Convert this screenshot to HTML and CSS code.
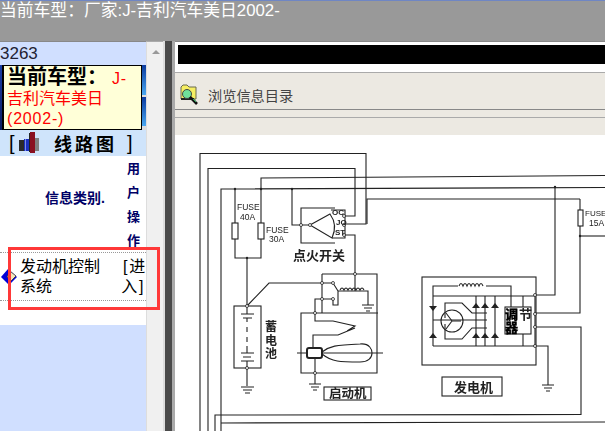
FILE: index.html
```html
<!DOCTYPE html>
<html lang="zh-CN">
<head>
    <meta charset="UTF-8">
    <title>当前车型</title>
    <link rel="stylesheet" href="styles.css">
</head>
<body>
    <div class="top-bar">当前车型：厂家:J-吉利汽车美日2002-</div>
    <div class="main">
        <div class="side">
            <div class="side-id">3263</div>
            <div class="car-row">
                <div class="car-strip-left"></div>
                <div class="car-box">
                    <span class="car-label">当前车型：</span><span class="car-name"><span class="half half--first">J-</span>吉利汽车美日<span class="half">(2002-)</span></span>
                </div>
                <div class="car-strip-right"><span></span><span></span></div>
            </div>
            <div class="side-title">
                <span class="bracket">[</span>
                <svg class="book-icon" width="20" height="22" xmlns="http://www.w3.org/2000/svg">
                    <rect x="0" y="8" width="5" height="11" fill="#2a2a2a"></rect>
                    <rect x="5" y="7" width="5" height="12" fill="#1a2fc0"></rect>
                    <rect x="6" y="7" width="1" height="12" fill="#7f8fe0"></rect>
                    <rect x="11" y="0" width="5" height="21" fill="#8a1020"></rect>
                    <rect x="10" y="1" width="1" height="19" fill="#222"></rect>
                    <rect x="16" y="6" width="4" height="13" fill="#808080"></rect>
                </svg>
                <span class="side-title__text">线路图</span>
                <span class="bracket">]</span>
            </div>
            <div class="info-table">
                <div class="info-label">信息类别.</div>
                <div class="info-user">
                    <span>用</span><span>户</span><span>操</span><span>作</span>
                </div>
            </div>
            <div class="sys-row">
                <svg class="diamond" width="18" height="18" xmlns="http://www.w3.org/2000/svg">
                    <polygon points="8,1 1,9 9,17 17,9" fill="#0000d8"></polygon>
                    <polygon points="10,3 16,8 11,13 7,9" fill="#f4e6b8" stroke="#222" stroke-width="0.7"></polygon>
                </svg>
                <div class="sys-name">发动机控制系统</div>
                <div class="sys-enter"><span class="half-box">[</span>进入<span class="half-box">]</span></div>
            </div>
            <div class="side-white"></div>
        </div>
        <div class="scroll"><span class="scroll-up"></span></div>
        <div class="split"></div>
        <div class="content">
            <div class="strip-wrap"><div class="black-strip"></div></div>
            <div class="toolbar">
                <svg class="folder-icon" width="19" height="22" xmlns="http://www.w3.org/2000/svg">
                    <path d="M1 3L3 1H7L9 3H16V15H1Z" fill="#f6ee62" stroke="#6a6a50"></path>
                    <path d="M1 15H14" stroke="#222" stroke-width="2"></path>
                    <circle cx="7" cy="10" r="4.5" fill="#6fe09a" stroke="#444"></circle>
                    <path d="M10 13L17 20" stroke="#111" stroke-width="2.6"></path>
                    <path d="M13 15L16 18" stroke="#2bb35c" stroke-width="1"></path>
                </svg>
                <span class="toolbar-text">浏览信息目录</span>
            </div>
            <div class="subbar"></div>
            <div class="drawing">
                <svg class="circuit" width="430" height="296" viewBox="175 135 430 296" xmlns="http://www.w3.org/2000/svg">
                    <g class="wire">
                        <!-- long feeds from the ignition switch -->
                        <path d="M200 431V153.5H366V224H345"></path>
                        <path d="M208 431V168.5H355V216H345"></path>
                        <path d="M261 223V178L605 175.500"></path>
                        <path d="M221 431V189L605 187.500"></path>
                        <!-- fuses -->
                        <path d="M235 189V223M235 239V258H261V239"></path>
                        <path d="M247 258V306"></path>
                        <!-- ignition switch -->
                        <path d="M292 189V225H310"></path>
                        <path d="M335 208H301V243H335"></path>
                        <path d="M310 225L330 214Q338 225 332 238Z"></path>
                        <path d="M331 210H345V238H332"></path>
                        <path d="M367 224V199H580"></path>
                        <path d="M345 235H355V274"></path>
                        <!-- starter relay -->
                        <path d="M247 306L269 283H333"></path>
                        <path d="M322 274H377V373H301V313H378"></path>
                        <path d="M322 274V313"></path>
                        <path d="M315 313V299H333V305H338V291M333 283L338 291"></path>
                        <path d="M338 291H368V305M355 274V291"></path>
                        <path d="M340 290Q342 286 344 290Q346 286 348 290Q350 286 352 290Q354 286 356 290Q358 286 360 290Q362 286 364 290"></path>
                        <path d="M315 313V321H333L355 326L347 331M313 348V335H338L355 328"></path>
                        <path d="M297 353H383"></path>
                        <path d="M322 352C330 346 335 345 360 344C370 343 372 350 372 353C372 358 368 362 360 362C340 362 332 362 322 354"></path>
                        <path d="M315 358V384"></path>
                        <!-- battery -->
                        <rect x="234" y="306" width="27" height="62"></rect>
                        <path d="M247 306V314M241 314H254M243 318H252M247 318V322M247 327V332M247 337V342M247 346V353M241 353H254M243 357H251M241 361H254M247 361V386"></path>
                        <!-- bottom loop -->
                        <path d="M215 431V415L581 414.500V327H535"></path>
                        <path d="M221 423L605 422"></path>
                        <!-- right feeds -->
                        <path d="M555 187V295H535"></path>
                        <path d="M580 199V210M580 226V313H535"></path>
                        <path d="M580 236H605"></path>
                        <!-- generator -->
                        <rect x="422" y="277" width="114" height="88"></rect>
                        <path d="M433 346V286H458M486 286H511V308"></path>
                        <path d="M459 286Q461 281 463 286Q465 281 467 286Q469 281 471 286Q473 281 475 286Q477 281 479 286Q481 281 483 286"></path>
                        <path d="M433 296H535V346H433"></path>
                        <path d="M476 296V346M485 296V346M495 296V346"></path>
                        <path d="M523 296V307M523 334V346"></path>
                        <path d="M445 318V303H462L472 313H487M445 324V339H462L472 328H487"></path>
                        <path d="M433 320H487"></path>
                        <circle cx="452" cy="321" r="11"></circle>
                        <path d="M452 321L446 313M452 321L446 329M452 321H461"></path>
                        <path d="M535 346H548V385"></path>
                    </g>
                    <g class="solid">
                        <polygon points="429,306 437,306 433,311"></polygon>
                        <polygon points="429,338 437,338 433,333"></polygon>
                        <polygon points="472,308 480,308 476,303"></polygon>
                        <polygon points="481,308 489,308 485,303"></polygon>
                        <polygon points="491,308 499,308 495,303"></polygon>
                        <polygon points="472,338 480,338 476,333"></polygon>
                        <polygon points="481,338 489,338 485,333"></polygon>
                        <polygon points="491,338 499,338 495,333"></polygon>
                        <circle cx="235" cy="189" r="1.2"></circle>
                        <circle cx="261" cy="189" r="1.2"></circle>
                        <circle cx="292" cy="189" r="1.2"></circle>
                        <circle cx="555" cy="187" r="1.2"></circle>
                        <circle cx="580" cy="236" r="1.2"></circle>
                        <circle cx="247" cy="258" r="1.2"></circle>
                    </g>
                    <g class="nodes">
                        <circle cx="301" cy="225" r="1.5"></circle>
                        <circle cx="310" cy="225" r="1.5"></circle>
                        <circle cx="344" cy="216" r="1.5"></circle>
                        <circle cx="344" cy="225" r="1.5"></circle>
                        <circle cx="344" cy="235" r="1.5"></circle>
                        <circle cx="355" cy="274" r="1.5"></circle>
                        <circle cx="322" cy="283" r="1.5"></circle>
                        <circle cx="333" cy="283" r="1.5"></circle>
                        <circle cx="322" cy="299" r="1.5"></circle>
                        <circle cx="333" cy="299" r="1.5"></circle>
                        <circle cx="315" cy="313" r="1.5"></circle>
                        <circle cx="315" cy="373" r="1.5"></circle>
                        <circle cx="247" cy="306" r="1.5"></circle>
                        <circle cx="247" cy="368" r="1.5"></circle>
                        <circle cx="535" cy="295" r="1.5"></circle>
                        <circle cx="535" cy="314" r="1.5"></circle>
                        <circle cx="535" cy="327" r="1.5"></circle>
                        <circle cx="535" cy="346" r="1.5"></circle>
                    </g>
                    <g class="parts">
                        <rect x="232" y="223" width="6" height="16"></rect>
                        <rect x="258" y="223" width="6" height="16"></rect>
                        <rect x="578" y="210" width="5" height="16"></rect>
                        <rect x="505" y="307" width="26" height="27"></rect>
                        <rect class="armature" x="307" y="348" width="15" height="10" rx="2"></rect>
                    </g>
                    <path class="ground" d="M241 387H254M243 390H252M245 393H250M309 384H321M311 387H319M313 390H317M362 305H374M364 308H372M366 311H370M542 385H554M544 388H552M546 391H550"></path>
                    <text class="fuse" x="237" y="210">FUSE</text>
                    <text class="fuse" x="240" y="219.500">40A</text>
                    <text class="fuse" x="266" y="232.500">FUSE</text>
                    <text class="fuse" x="269" y="242">30A</text>
                    <text class="fuse fuse--tight" x="585" y="216">FUSE</text>
                    <text class="fuse" x="589" y="225.500">15A</text>
                    <text class="switch-tag" x="332" y="215">OC</text>
                    <text class="switch-tag" x="336" y="225">JO</text>
                    <text class="switch-tag" x="335" y="235">ST</text>
                    <text class="cjk" x="293" y="260">点火开关</text>
                    <text class="cjk cjk--col" x="265" y="331">蓄</text>
                    <text class="cjk cjk--col" x="265" y="345">电</text>
                    <text class="cjk cjk--col" x="265" y="358">池</text>
                    <text class="cjk cjk--heavy" x="505" y="319">调</text>
                    <text class="cjk" x="519" y="319">节</text>
                    <text class="cjk cjk--heavy" x="505" y="332">器</text>
                    <rect class="label-box" x="324" y="387" width="47" height="13"></rect>
                    <text class="cjk cjk--small" x="329" y="398">启动机</text>
                    <rect class="label-box" x="442" y="377" width="60" height="19"></rect>
                    <text class="cjk" x="454" y="392">发电机</text>
                </svg>
            </div>
        </div>
    </div>
</body>
</html>
```

FILE: styles.css
```css
*{
    margin: 0;
    padding: 0;
    box-sizing: border-box;
}
html,body{
    height: 100%;
    overflow: hidden;
}
body{
    display: flex;
    flex-direction: column;
    background-color: #fff;
    font-family: "Liberation Sans", "Noto Sans CJK SC", sans-serif;
}
.top-bar{
    height: 41px;
    background-color: #999;
    border-top: 1px solid #6f86c4;
    color: #fff;
    font-size: 16.800px;
    line-height: 20px;
    white-space: nowrap;
    overflow: hidden;
}
.main{
    flex: 1;
    display: flex;
    min-height: 0;
}
.side{
    width: 147px;
    position: relative;
    z-index: 1;
    display: flex;
    flex-direction: column;
    background-color: #d0dfff;
    border-top: 1px solid #888;
    border-right: 1px solid #ddd;
}
.side-id{
    height: 23px;
    padding-top: 2px;
    font-size: 17px;
    line-height: 20px;
    color: #223;
}
.car-row{
    height: 65px;
    display: flex;
}
.car-strip-left{
    width: 3px;
    background: linear-gradient(#1a3ea8, #0a1c60);
    border-right: 1px solid #000;
}
.car-box{
    width: 139px;
    padding: 1px 2px 0 3px;
    background-color: #ffffd8;
    border: 1px solid #000;
    font-size: 16px;
    line-height: 20px;
}
.car-label{
    font-weight: bold;
    font-size: 20px;
}
.car-name{
    color: #f00;
}
.half{
    letter-spacing: 0.8px;
}
.half--first{
    padding-left: 5px;
}
.car-strip-right{
    width: 4px;
    display: flex;
    flex-direction: column;
    gap: 2px;
    padding-bottom: 4px;
    background-color: #ddd;
}
.car-strip-right span{
    flex: 1;
    background: linear-gradient(#0a3aa0, #4aa8f0);
}
.side-title{
    height: 26px;
    flex: none;
    display: flex;
    align-items: center;
    padding-left: 9px;
    background-color: #cfe4fb;
    font-size: 18px;
}
.bracket{
    width: 10px;
    font-size: 20px;
}
.book-icon{
    margin-right: 15px;
}
.side-title__text{
    width: 73px;
    letter-spacing: 3px;
    font-weight: bold;
}
.info-table{
    height: 96px;
    flex: none;
    display: flex;
    background-color: #fff;
    color: #000066;
    font-weight: bold;
}
.info-label{
    width: 127px;
    padding: 32px 0 0 45px;
    font-size: 14px;
    line-height: 20px;
}
.info-user{
    display: flex;
    flex-direction: column;
    gap: 8px;
    padding-top: 5px;
    font-size: 13px;
    line-height: 16px;
}
.sys-row{
    height: 49px;
    flex: none;
    position: relative;
    display: flex;
    align-items: center;
    background-color: #fff;
    border-top: 1px dotted #999;
    border-bottom: 1px dotted #999;
    font-size: 16px;
    line-height: 20px;
}
.diamond{
    flex: none;
    margin-right: 2px;
}
.sys-name{
    width: 102px;
    padding-right: 18px;
}
.sys-enter{
    width: 25px;
}
.half-box{
    display: inline-block;
    width: 8px;
    text-align: center;
}
.sys-row::after{
    content: "";
    position: absolute;
    left: 8px;
    top: -6px;
    width: 146px;
    height: 57px;
    border: 3px solid #ff3838;
}
.side-white{
    height: 24px;
    flex: none;
    background-color: #fff;
}
.scroll{
    width: 16px;
    position: relative;
    background-color: #f0f0f0;
    border-top: 1px solid #aaa;
}
.scroll-up{
    position: absolute;
    left: 5px;
    top: 8px;
    border-left: 4px solid transparent;
    border-right: 4px solid transparent;
    border-bottom: 4px solid #999;
}
.split{
    width: 12px;
    background-color: #4a4a4a;
    border-left: 2px solid #ddd;
    border-right: 3px solid #aaa;
}
.content{
    flex: 1;
    min-width: 0;
    display: flex;
    flex-direction: column;
    background-color: #ece9e2;
    border-top: 1px solid #888;
}
.strip-wrap{
    height: 31px;
    padding: 3px 0 0 3px;
    background-color: #fff;
    border-bottom: 1px solid #aaa;
}
.black-strip{
    height: 19px;
    background-color: #000;
}
.toolbar{
    height: 37px;
    flex: none;
    display: flex;
    align-items: center;
    gap: 9px;
    padding: 8px 0 0 5px;
    border-bottom: 1px solid #888;
}
.toolbar-text{
    font-size: 14.200px;
    color: #444;
}
.subbar{
    height: 18px;
    flex: none;
    margin-top: 7px;
    border-top: 1px solid #aaa;
}
.drawing{
    flex: 1;
    background-color: #fff;
    overflow: hidden;
}
.circuit{
    display: block;
    filter: blur(0.3px);
}
.wire path,.wire rect,.wire circle{
    fill: none;
    stroke: #222;
    stroke-width: 1.1;
}
.solid polygon,.solid circle{
    fill: #222;
}
.nodes circle{
    fill: #fff;
    stroke: #222;
    stroke-width: 0.8;
}
.parts rect{
    fill: #fff;
    stroke: #222;
    stroke-width: 1.1;
}
.parts .armature{
    stroke-width: 2;
}
.ground{
    fill: none;
    stroke: #222;
    stroke-width: 1.1;
}
.label-box{
    fill: #fff;
    stroke: #222;
    stroke-width: 1.1;
}
.fuse{
    font-family: "Liberation Sans", sans-serif;
    font-size: 8.500px;
    fill: #222;
}
.fuse--tight{
    font-size: 8px;
}
.switch-tag{
    font-family: "Liberation Sans", sans-serif;
    font-size: 8px;
    font-weight: bold;
    fill: #222;
}
.cjk{
    font-family: "Noto Sans CJK SC", sans-serif;
    font-size: 13px;
    font-weight: bold;
    fill: #222;
}
.cjk--small{
    font-size: 12.500px;
}
.cjk--col{
    font-size: 12px;
}
.cjk--heavy{
    stroke: #000;
    stroke-width: 0.5;
    fill: #000;
}
```
